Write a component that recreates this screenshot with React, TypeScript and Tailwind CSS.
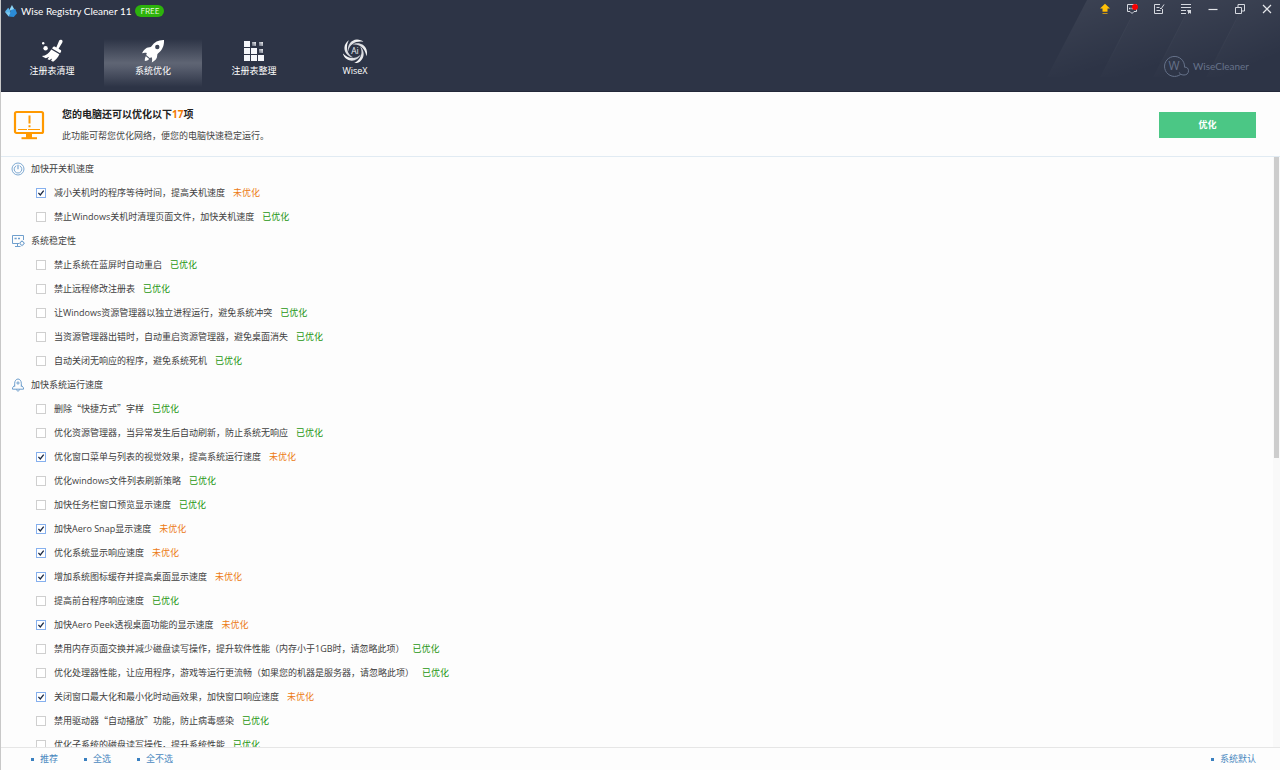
import React from "react";

type Item = { text: string; todo?: boolean; quoted?: boolean };
type Group = { title: string; icon: React.ReactNode; items: Item[] };

const PowerIcon = () => (
  <svg viewBox="0 0 14 14" className="size-3.5" fill="none" stroke="#6f9fcd" strokeWidth="0.9" aria-hidden="true">
    <circle cx="7" cy="7" r="6" />
    <path d="M5.3 3.8a3.8 3.8 0 1 0 3.4 0" />
    <path d="M7 2.8v4.4" strokeWidth="1.1" />
  </svg>
);

const MonitorGearIcon = () => (
  <svg viewBox="0 0 14 14" className="size-3.5" fill="none" stroke="#6f9fcd" aria-hidden="true">
    <path d="M12.5 6V1.5H1.5v8H8" />
    <path d="M3.5 4.5h2.2M7 4.5h2" strokeWidth="1.4" />
    <path d="M6.5 9.5v3M4 12.5h5.5" />
    <circle cx="11" cy="9.3" r="1.9" />
    <path d="M11 6.4v1M11 11.2v1M8.3 9.3h.8M13 9.3h.8" strokeWidth="0.8" />
  </svg>
);

const RocketBellIcon = () => (
  <svg viewBox="0 0 14 14" className="size-3.5" fill="none" stroke="#6f9fcd" aria-hidden="true">
    <path d="M3.7 8.8V5.2C3.7 2.8 5.3 1 7 1s3.3 1.8 3.3 4.2v3.6" />
    <path d="M3.7 7.2 1.5 9.8v1.4h11V9.8l-2.2-2.6" />
    <circle cx="7" cy="5" r="1.1" />
    <path d="M5.5 11.4c0 1 .7 1.6 1.5 1.6s1.5-.6 1.5-1.6" />
  </svg>
);

const groups: Group[] = [
  {
    title: "加快开关机速度",
    icon: <PowerIcon />,
    items: [
      { text: "减小关机时的程序等待时间，提高关机速度", todo: true },
      { text: "禁止Windows关机时清理页面文件，加快关机速度" },
    ],
  },
  {
    title: "系统稳定性",
    icon: <MonitorGearIcon />,
    items: [
      { text: "禁止系统在蓝屏时自动重启" },
      { text: "禁止远程修改注册表" },
      { text: "让Windows资源管理器以独立进程运行，避免系统冲突" },
      { text: "当资源管理器出错时，自动重启资源管理器，避免桌面消失" },
      { text: "自动关闭无响应的程序，避免系统死机" },
    ],
  },
  {
    title: "加快系统运行速度",
    icon: <RocketBellIcon />,
    items: [
      { text: "删除“快捷方式”字样", quoted: true },
      { text: "优化资源管理器，当异常发生后自动刷新，防止系统无响应" },
      { text: "优化窗口菜单与列表的视觉效果，提高系统运行速度", todo: true },
      { text: "优化windows文件列表刷新策略" },
      { text: "加快任务栏窗口预览显示速度" },
      { text: "加快Aero Snap显示速度", todo: true },
      { text: "优化系统显示响应速度", todo: true },
      { text: "增加系统图标缓存并提高桌面显示速度", todo: true },
      { text: "提高前台程序响应速度" },
      { text: "加快Aero Peek透视桌面功能的显示速度", todo: true },
      { text: "禁用内存页面交换并减少磁盘读写操作，提升软件性能（内存小于1GB时，请忽略此项）" },
      { text: "优化处理器性能，让应用程序，游戏等运行更流畅（如果您的机器是服务器，请忽略此项）" },
      { text: "关闭窗口最大化和最小化时动画效果，加快窗口响应速度", todo: true },
      { text: "禁用驱动器“自动播放”功能，防止病毒感染", quoted: true },
      { text: "优化子系统的磁盘读写操作，提升系统性能" },
    ],
  },
];

const BroomIcon = () => (
  <svg viewBox="0 0 24 24" className="size-6" fill="#fff" aria-hidden="true">
    <path d="M19.2 1.6c.6-1 1.8-1 2.6-.5.9.6 1 1.5.5 2.4l-3.7 6.3 2 1.3c.6.4.8 1 .4 1.7l-.9 1.5-8-4.8.9-1.5c.4-.6 1-.8 1.7-.4l1.6 1z" />
    <path d="m11.3 10.4 8.1 4.9c-1.3 2.9-3.6 5.7-6.3 7.4l-2-.9 1.1-2.3-2.8 1.6-1.9-.9 1.7-2.4-3.3 1.4c-1.6-.6-3-1.4-4-2.2 4.2-.4 7.2-3 9.4-6.6Z" />
    <circle cx="3.2" cy="4.2" r="1.2" />
    <circle cx="5.6" cy="9.2" r="2.2" />
  </svg>
);

const RocketIcon = () => (
  <svg viewBox="0 0 24 24" className="size-6" fill="#fff" aria-hidden="true">
    <path
      fillRule="evenodd"
      d="M23 1C17.5.8 13.5 3 10.5 7.2 10 8 9.3 8.2 8.3 8.3 4.8 8.6 2.5 11 1 14.3c1.7-.7 3.3-.9 4.800-.3L5.200 16l3.500 3 2-.8c.6 1.600.6 3.200.1 5.300 3.400-1.700 5.400-3.900 5.400-7 0-1 .3-1.600 1-2.200C21.200 11 23.300 6.800 23 1Zm-6.700 4.800a2.200 2.200 0 1 1 0 4.400 2.200 2.200 0 0 1 0-4.400Z"
    />
    <path d="M4.9 17.2 8.2 20c-1 1.3-2.5 1.9-4.4 2-.1-1.8.2-3.500 1.100-4.800Z" />
  </svg>
);

const BlocksIcon = () => (
  <svg viewBox="0 0 24 24" className="size-6" fill="#f4f6fa" aria-hidden="true">
    <defs>
      <linearGradient id="block" x1="0" y1="1" x2="1" y2="0">
        <stop offset="0" stopColor="#5c6374" />
        <stop offset="1" stopColor="#f2f3f6" />
      </linearGradient>
    </defs>
    <path d="M2 2h6v6H2zM2 9h6v6H2zM2 16h6v6H2zM9 9h6v6H9zM9 16h6v6H9zM16 16h6v6h-6z" />
    <rect x="10" y="3" width="4" height="4" fill="url(#block)" />
    <rect x="17" y="3" width="4" height="4" fill="url(#block)" />
    <rect x="17" y="10" width="4" height="4" fill="url(#block)" />
  </svg>
);

const SwirlIcon = () => (
  <svg viewBox="0 0 24 24" className="size-6" aria-hidden="true">
    <defs>
      <linearGradient id="swirl" gradientUnits="userSpaceOnUse" x1="4" y1="14" x2="20" y2="2">
        <stop offset="0" stopColor="#c2c5cd" />
        <stop offset="1" stopColor="#ffffff" />
      </linearGradient>
    </defs>
    {[0, 72, 144, 216, 288].map((a) => (
      <path
        key={a}
        transform={`rotate(${a} 12 12)`}
        fill="url(#swirl)"
        d="M5.2 12.500C3.800 6.800 7.800.8 14 .6c2.600 0 4.900.9 6.400 2.300C14.500 1.400 6.600 4.300 5.200 12.500Z"
      />
    ))}
    <text x="12" y="15" textAnchor="middle" fontSize="8.5" fill="#eceef2" fontFamily="Open Sans, sans-serif">Ai</text>
  </svg>
);

const tabs = [
  { label: "注册表清理", icon: <BroomIcon /> },
  { label: "系统优化", icon: <RocketIcon />, active: true },
  { label: "注册表整理", icon: <BlocksIcon /> },
  { label: "WiseX", icon: <SwirlIcon /> },
];

const AppLogo = () => (
  <svg viewBox="0 0 13 13" className="size-3" aria-hidden="true">
    <path d="M7.5 0 5 5l3 3.500 2.500-3z" fill="#8ed6f7" />
    <path d="M3.500 3 0 7l4.500 3L6 6.500z" fill="#5bb6ec" />
    <path d="M6.500 5.500 4 12.500l5.500.5 3.500-4-2-5z" fill="#2b8bd6" />
    <path d="M0 7.500 6 8l-2 4.500z" fill="#7ccaf1" />
  </svg>
);

const windowIcons = [
  {
    label: "升级",
    art: (
      <>
        <path d="M6 .8 1 5.500h2.500V8h5V5.500H11z" fill="#ffc107" />
        <path d="M3.500 8.500h5M3.500 10.500h5" stroke="#c99412" />
      </>
    ),
  },
  {
    label: "消息",
    art: (
      <>
        <path d="M1.500 1.500h9v7H8l-2 2-2-2H1.500z" fill="none" stroke="#d5d8df" />
        <path d="M3 5.500h1.500M5.500 5.500H7" stroke="#d5d8df" strokeWidth="1.4" />
        <circle cx="9" cy="4" r="3" fill="#f80000" />
      </>
    ),
  },
  {
    label: "反馈",
    art: <path d="M7 1.500H1.500v9h8V6M3.500 4.500H6M3.500 7.500h4M6.500 4.500 8 6l3-4.500" fill="none" stroke="#d5d8df" />,
  },
  {
    label: "菜单",
    art: (
      <>
        <path d="M1 1.500h10M1 4.500h10M1 7.500h5M1 10.500h5" stroke="#d5d8df" />
        <path d="M7 7h4v4L9.700 9.700 8 11V9z" fill="#d5d8df" />
      </>
    ),
  },
  { label: "最小化", art: <path d="M1.500 6.500h9" stroke="#e4e6ea" strokeWidth="1.2" /> },
  { label: "还原", art: <path d="M1.500 4.500h6v6h-6zM4 4V1.500h6.500V8H8" fill="none" stroke="#d5d8df" /> },
  { label: "关闭", art: <path d="m2 2 8 8M10 2l-8 8" stroke="#e4e6ea" strokeWidth="1.2" /> },
];

function Header() {
  return (
    <header className="relative flex h-[92px] shrink-0 flex-col border-b border-[#23283a] bg-[#2d3446] text-white">
      <svg viewBox="0 0 240 91" className="pointer-events-none absolute top-0 right-0 h-[91px] w-60" aria-hidden="true">
        <defs>
          <linearGradient id="beam" x1="0.3" y1="0" x2="0.7" y2="1">
            <stop offset="0" stopColor="#fff" stopOpacity="0.07" />
            <stop offset="0.85" stopColor="#fff" stopOpacity="0" />
          </linearGradient>
        </defs>
        <path d="M47 0h53L62 77H7z" fill="url(#beam)" />
        <path d="M100 0h53l-38 77H60z" fill="url(#beam)" />
        <path d="M153 0h53l-38 77h-55z" fill="url(#beam)" />
        <path d="M206 0h34v77h-74z" fill="url(#beam)" />
      </svg>
      <div className="relative flex h-[22px] items-center">
        <h1 className="flex flex-1 items-center gap-1 pl-1 font-['Lato',sans-serif] text-[10px] leading-3 font-normal">
          <AppLogo />
          Wise Registry Cleaner 11
          <span className="rounded-full bg-[#2db30c] px-[5px] font-['Noto_Sans_CJK_SC',sans-serif] text-[8px] leading-3 text-[#e4f8df]">
            FREE
          </span>
        </h1>
        <div className="flex pb-1">
          {windowIcons.map((w) => (
            <button key={w.label} type="button" aria-label={w.label} className="flex w-[27px] justify-center">
              <svg viewBox="0 0 12 12" className="size-3" aria-hidden="true">{w.art}</svg>
            </button>
          ))}
        </div>
      </div>
      <div className="relative flex flex-1 items-start justify-between pt-[17px] pr-[31px]">
        <nav className="flex gap-[3px] pl-0.5">
          {tabs.map((t) => (
            <button
              key={t.label}
              type="button"
              className={
                "flex h-12 w-[98px] flex-col items-center text-[9px] leading-4 " +
                (t.active
                  ? "bg-[linear-gradient(to_bottom,transparent,#5f6574_50%,#575d6d_60%,transparent)]"
                  : "")
              }
            >
              {t.icon}
              <span>{t.label}</span>
            </button>
          ))}
        </nav>
        <div className="flex items-center gap-1 pt-[15px] font-['Lato',sans-serif] text-[10px] leading-4 text-[#66728a]">
          <svg viewBox="0 0 26 24" className="h-6 w-[26px]" fill="none" stroke="#66728a" aria-hidden="true">
            <path d="M17.7 20.3A10 10 0 1 1 21.5 13.200C24 12.800 25.500 14.500 25.500 16.800 25.500 19.500 23.500 21 21 21c-1.500 0-2.500-.3-3.300-.7-1-.6-1.300-1.300-1.400-2" />
            <text x="11" y="16.3" textAnchor="middle" fontSize="12" fill="#66728a" stroke="none" fontFamily="Open Sans, sans-serif">W</text>
          </svg>
          WiseCleaner
        </div>
      </div>
    </header>
  );
}

function Summary() {
  return (
    <section className="flex h-[65px] shrink-0 items-center border-b border-[#e1ebf3] pt-0.5 pr-6 pl-3">
      <svg viewBox="0 0 32 30" className="h-[30px] w-8" fill="none" stroke="#ff9900" aria-hidden="true">
        <rect x="2" y="2" width="28" height="21" rx="1.5" strokeWidth="2.2" />
        <path d="M5 19.500h22" strokeWidth="1" strokeDasharray="9 1 12 0" />
        <path d="M16.500 5.500v8M16.500 15.200v2" strokeWidth="2" />
        <path d="M16 23v5" strokeWidth="6" />
        <path d="M8.500 28.200h15.500" strokeWidth="2" />
      </svg>
      <div className="flex-1 pl-[17px]">
        <h2 className="text-[10px] leading-[21px] font-bold text-[#222]">
          您的电脑还可以优化以下<span className="text-[#f07800]">17</span>项
        </h2>
        <p className="text-[9px] leading-[21px] text-[#444]">此功能可帮您优化网络，便您的电脑快速稳定运行。</p>
      </div>
      <button type="button" className="h-[26px] w-[97px] bg-[#4bc785] text-[9px] font-bold text-white">优化</button>
    </section>
  );
}

function Row({ item }: { item: Item }) {
  return (
    <li className="flex h-6 items-center pl-[35px]">
      <label className="flex items-center text-[9px] leading-4 text-[#404040]">
        <span className="relative mr-2 flex size-[10px]">
          <input
            type="checkbox"
            defaultChecked={item.todo}
            className="peer size-[10px] appearance-none border border-[#cfcfcf] bg-white checked:border-[#86b0ee]"
          />
          <svg viewBox="0 0 10 10" className="pointer-events-none absolute inset-0 hidden size-[10px] peer-checked:block" aria-hidden="true">
            <path d="M2.4 4.9 4.3 7 7.7 2.6" fill="none" stroke="#1c2a44" strokeWidth="1.3" />
          </svg>
        </span>
        <span className={item.quoted ? "font-['Noto_Sans_CJK_SC',sans-serif]" : ""}>{item.text}</span>
      </label>
      <span className={"pl-2 text-[9px] leading-4 " + (item.todo ? "text-[#ec7a12]" : "text-[#1e9610]")}>
        {item.todo ? "未优化" : "已优化"}
      </span>
    </li>
  );
}

function FooterLink({ children }: { children: string }) {
  return (
    <a href="#" className="flex items-center gap-1.5 text-[9px] leading-4 text-[#4a88bf]">
      <span className="size-[3px] bg-[#3a80c0]" />
      {children}
    </a>
  );
}

export default function App() {
  return (
    <div
      lang="zh-CN"
      className="flex h-screen flex-col border-l border-[#c8c8c8] bg-[#fdfdfd] font-['Open_Sans','Noto_Sans_CJK_SC',sans-serif]"
    >
      <Header />
      <Summary />
      <main className="flex min-h-0 flex-1">
        <div className="flex-1 overflow-y-auto [scrollbar-width:none]">
          {groups.map((g) => (
            <section key={g.title}>
              <h3 className="flex h-6 items-center gap-1.5 pl-2.5 text-[9px] leading-4 text-[#404040]">
                {g.icon}
                {g.title}
              </h3>
              <ul>
                {g.items.map((it) => (
                  <Row key={it.text} item={it} />
                ))}
              </ul>
            </section>
          ))}
        </div>
        <div className="w-[7px] bg-[#f9f9f9] px-px">
          <div className="h-[51%] bg-[#cdcdcd]" />
        </div>
      </main>
      <footer className="flex h-[23px] shrink-0 items-center justify-between border-t border-[#e6e6e6] pr-6 pl-[30px]">
        <div className="flex gap-[26px]">
          <FooterLink>推荐</FooterLink>
          <FooterLink>全选</FooterLink>
          <FooterLink>全不选</FooterLink>
        </div>
        <FooterLink>系统默认</FooterLink>
      </footer>
    </div>
  );
}
